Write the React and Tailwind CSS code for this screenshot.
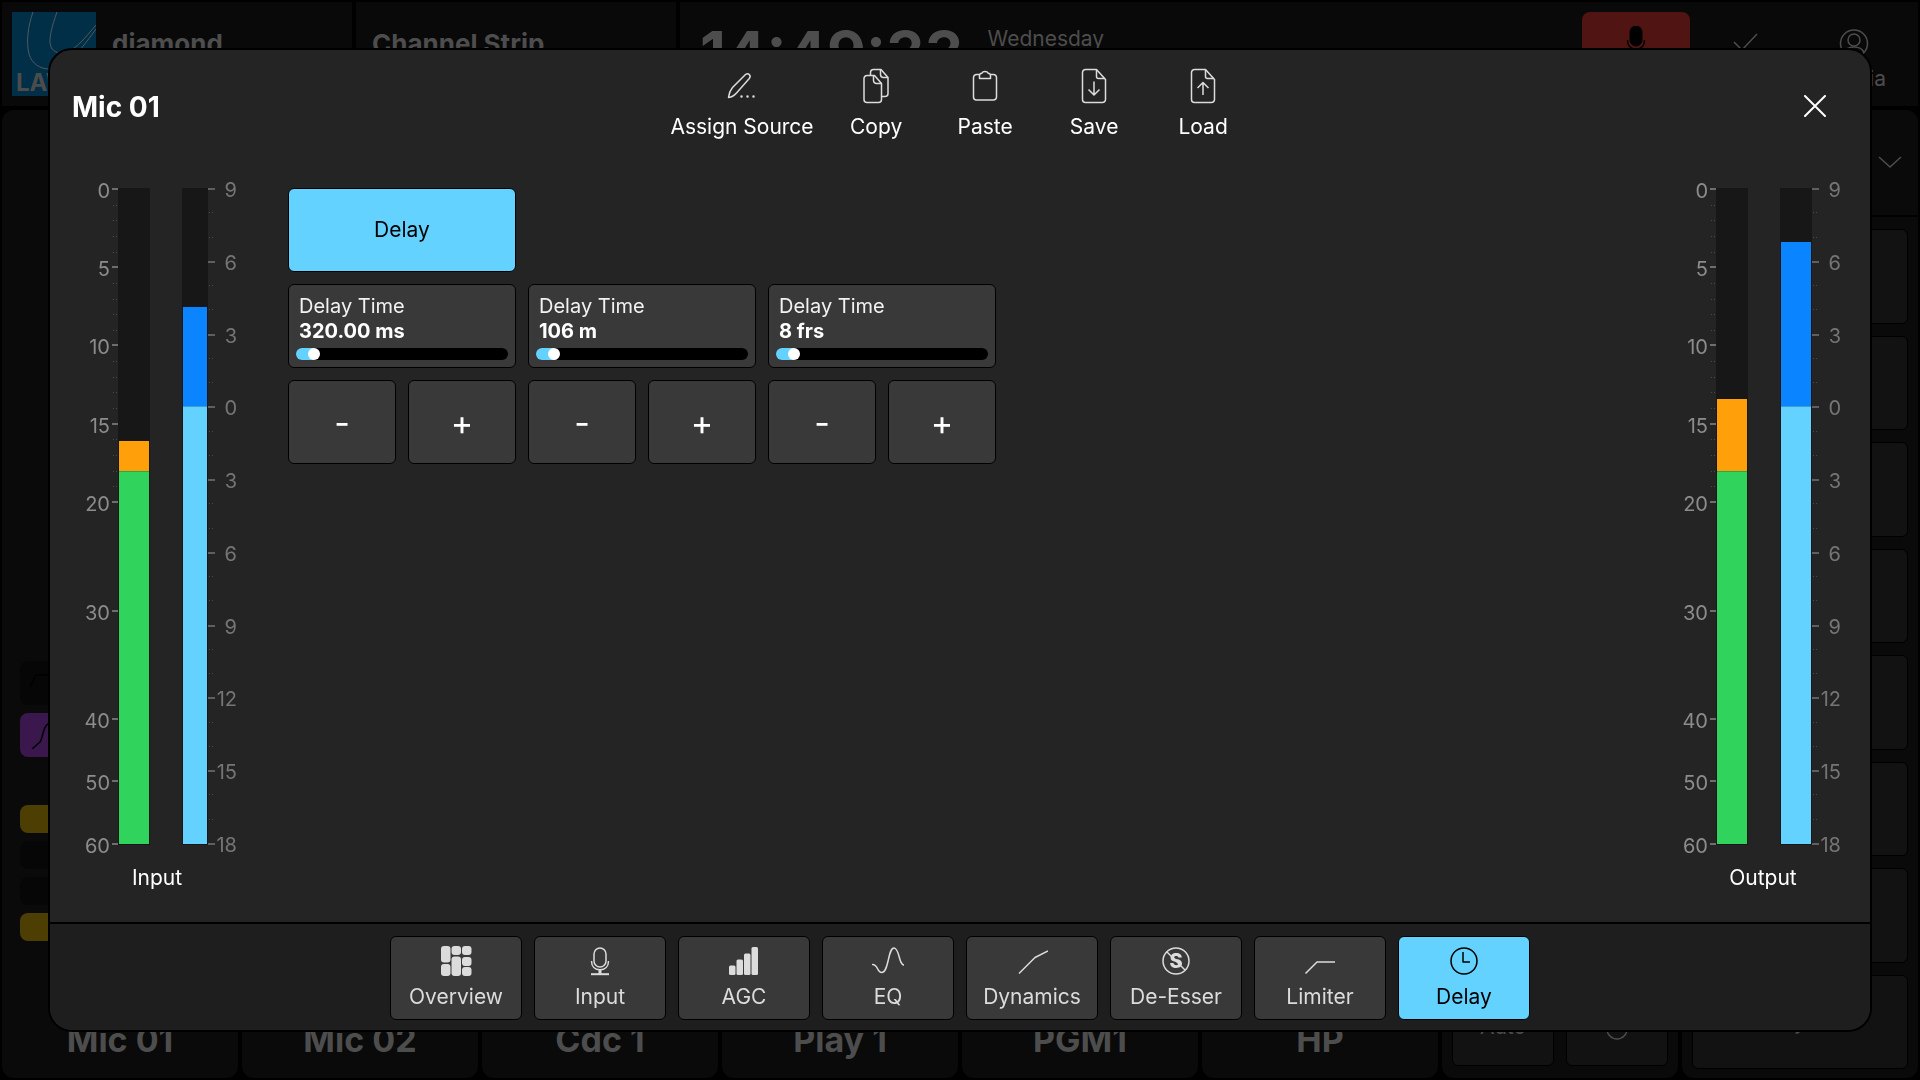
import React, { useState } from "react";
import clsx from "clsx";

const STRIPS = ["Mic 01", "Mic 02", "Cdc 1", "Play 1", "PGM1", "HP"];

const LEVEL_SCALE = [
  { label: "0", y: 15 },
  { label: "5", y: 93 },
  { label: "10", y: 171 },
  { label: "15", y: 250 },
  { label: "20", y: 328 },
  { label: "30", y: 437 },
  { label: "40", y: 545 },
  { label: "50", y: 607 },
  { label: "60", y: 670 },
];

const GAIN_LABELS = ["9", "6", "3", "0", "3", "6", "9", "12", "15", "18"];

const METER_TOP = 14;
const METER_BOTTOM = 670;

/* ---------- Icons ---------- */

const Icon = ({ size = 32, children }) => (
  <svg
    width={size}
    height={size}
    viewBox={`0 0 ${size} ${size}`}
    fill="none"
    stroke="currentColor"
    strokeWidth="1.5"
    strokeLinejoin="round"
    aria-hidden="true"
  >
    {children}
  </svg>
);

const PencilIcon = () => (
  <Icon size={36}>
    <path d="M4.5 29.5 C5 25.5 6 22.5 8.5 19.5 L21.5 6.5 C23 5.3 24.3 5.5 25.3 6.6 C26.4 7.7 26.5 9 25.3 10.5 L12.5 25 C10.5 27.5 8 29 4.5 29.5 Z" />
    <path
      d="M17.5 28.5h.01M23.5 28.5h.01M29.5 28.5h.01"
      strokeWidth="2.5"
      strokeLinecap="round"
    />
  </Icon>
);

const CopyIcon = () => (
  <Icon size={36}>
    <path d="M12.5 7.5V4.5a3 3 0 0 1 3-3H23l7 8v16a3 3 0 0 1-3 3h-3" />
    <path d="M22.5 2v4.5a3 3 0 0 0 3 3H30" />
    <path d="M9 7.5h7.5l7 8V31.5a3 3 0 0 1-3 3H9a3 3 0 0 1-3-3V10.5a3 3 0 0 1 3-3Z" />
    <path d="M15.5 8v4.5a3 3 0 0 0 3 3h5" />
  </Icon>
);

const PasteIcon = () => (
  <Icon size={36}>
    <path d="M12 6.5h-2.5a3 3 0 0 0-3 3v19.5a3 3 0 0 0 3 3h17a3 3 0 0 0 3-3v-19.5a3 3 0 0 0-3-3H24" />
    <path d="M12.5 10.5V7.5c0-1.5 1-2 2.2-2.2C15.5 3.8 16.6 3.5 18 3.5s2.5.3 3.3 1.8c1.2.2 2.2.7 2.2 2.2v3Z" />
  </Icon>
);

const PageShape = () => (
  <>
    <path d="M9.5 1.5H20.5l9 10V31.5a3 3 0 0 1-3 3H9.5a3 3 0 0 1-3-3V4.5a3 3 0 0 1 3-3Z" />
    <path d="M20.5 2v6.5a2 2 0 0 0 2 2h6.5" />
  </>
);

const SaveIcon = () => (
  <Icon size={36}>
    <PageShape />
    <path d="M18 13.5V26.5M12.5 21.5l5.5 5.5 5.5-5.5" />
  </Icon>
);

const LoadIcon = () => (
  <Icon size={36}>
    <PageShape />
    <path d="M18 27V14.5M12.5 20l5.5-5.5 5.5 5.5" />
  </Icon>
);

const OverviewIcon = () => (
  <Icon>
    <g fill="currentColor" stroke="none">
      <rect x="1" y="1" width="9.5" height="16.5" rx="3" />
      <rect x="1" y="19" width="9.5" height="12" rx="3" />
      <rect x="11.5" y="1" width="9.5" height="9" rx="3" />
      <rect x="11.5" y="11.5" width="9.5" height="19.5" rx="3" />
      <rect x="22" y="1" width="9.5" height="9" rx="3" />
      <rect x="22" y="12" width="9.5" height="9" rx="3" />
      <rect x="22" y="22" width="9.5" height="9" rx="3" />
    </g>
  </Icon>
);

const MicIcon = () => (
  <Icon>
    <rect x="10" y="3" width="12" height="19" rx="6" />
    <path d="M7.5 16c0 5.5 3.5 8.8 8.5 8.8s8.5-3.3 8.5-8.8" />
    <path d="M16 25v4" strokeWidth="3" />
    <path d="M7 29.2h18" strokeWidth="2" />
  </Icon>
);

const AgcIcon = () => (
  <Icon>
    <g fill="currentColor" stroke="none">
      <rect x="1" y="20.5" width="6.5" height="9.5" rx="1.5" />
      <rect x="8.5" y="14.5" width="6.5" height="15.5" rx="1.5" />
      <rect x="16" y="8.5" width="6.5" height="21.5" rx="1.5" />
      <rect x="23.5" y="2" width="6.5" height="28" rx="1.5" />
    </g>
  </Icon>
);

const EqIcon = () => (
  <Icon>
    <path
      d="M.5 19.5c3 0 4 2 5.2 4.5 1 2 2.2 3.5 4 3.5 7.3 0 6-24.5 12.3-24.5 3.2 0 4.5 6 5.8 11 .9 3.2 1.8 5.5 4 6"
      strokeLinecap="round"
    />
  </Icon>
);

const DynamicsIcon = () => (
  <Icon>
    <path d="M3 28.5 19 12.5 32 6" />
  </Icon>
);

const DeEsserIcon = () => (
  <Icon>
    <circle cx="16" cy="16" r="13" />
    <text
      x="16"
      y="23"
      textAnchor="middle"
      fontSize="20"
      fontWeight="800"
      fontFamily="Inter, sans-serif"
      fill="currentColor"
      stroke="none"
    >
      S
    </text>
    <path d="M7 7 25 25" />
  </Icon>
);

const LimiterIcon = () => (
  <Icon>
    <path d="M1.5 28.5 13 17H31" />
  </Icon>
);

const DelayIcon = () => (
  <Icon>
    <circle cx="16" cy="16" r="13" />
    <path d="M15 7v10h7" />
  </Icon>
);

const ACTIONS = [
  { label: "Assign Source", icon: PencilIcon },
  { label: "Copy", icon: CopyIcon },
  { label: "Paste", icon: PasteIcon },
  { label: "Save", icon: SaveIcon },
  { label: "Load", icon: LoadIcon },
];

const TABS = [
  { label: "Overview", icon: OverviewIcon },
  { label: "Input", icon: MicIcon },
  { label: "AGC", icon: AgcIcon },
  { label: "EQ", icon: EqIcon },
  { label: "Dynamics", icon: DynamicsIcon },
  { label: "De-Esser", icon: DeEsserIcon },
  { label: "Limiter", icon: LimiterIcon },
  { label: "Delay", icon: DelayIcon },
];

/* ---------- Meter ---------- */

const Meter = ({ label, gainWidth, peakY, gainY, className }) => {
  const gainRight = 100 + gainWidth;
  const gainStep = (METER_BOTTOM - METER_TOP - 1) / 27;
  const zeroY = Math.round(METER_TOP + gainStep * 9);

  return (
    <section className="w-[214px] shrink-0 pt-3" aria-label={`${label} level`}>
      <div className={clsx("flex", className)}>
        <svg
          width={gainRight + 30}
          height="684"
          viewBox={`0 0 ${gainRight + 30} 684`}
          className="overflow-visible"
          shapeRendering="crispEdges"
          fontSize="20"
        >
          {/* level scale */}
          {LEVEL_SCALE.map(({ label, y }) => (
            <g key={label}>
              <text x="28" y={y + 9} textAnchor="end" fill="#8c8c8c">
                {label}
              </text>
              <rect x="30" y={y - 1} width="6" height="2" fill="#6e6e6e" />
            </g>
          ))}
          {Array.from({ length: 20 }, (_, i) => i)
            .filter((i) => i % 5)
            .map((i) => (
              <path
                key={i}
                d={`M31 ${Math.round(15 + i * 15.65)}.5h1m2 0h1`}
                stroke="#4a4a4a"
              />
            ))}

          {/* level bar */}
          <rect x="36" y={METER_TOP} width="32" height="657" fill="#171717" />
          <rect x="37" y={peakY} width="30" height={297 - peakY} fill="#ffa00a" />
          <rect x="37" y="297" width="30" height="373" fill="#30d35b" />
          <rect x="37" y="297" width="30" height="1" fill="#2aa84b" />

          {/* gain bar */}
          <rect x="100" y={METER_TOP} width={gainWidth} height="657" fill="#171717" />
          <rect
            x="101"
            y={gainY}
            width={gainWidth - 2}
            height={zeroY - gainY}
            fill="#0a84ff"
          />
          <rect
            x="101"
            y={zeroY}
            width={gainWidth - 2}
            height={METER_BOTTOM - zeroY}
            fill="#64d2ff"
          />
          <rect x="101" y={zeroY} width={gainWidth - 2} height="1" fill="#3d9fd0" />

          {/* gain scale */}
          {GAIN_LABELS.map((text, i) => {
            const y = Math.round(METER_TOP + 1 + i * 3 * gainStep);
            return (
              <g key={i}>
                <rect x={gainRight} y={y - 1} width="7" height="2" fill="#5f5f5f" />
                <text x={gainRight + 29} y={y + 8} textAnchor="end" fill="#757575">
                  {text}
                </text>
              </g>
            );
          })}
          {Array.from({ length: 27 }, (_, i) => i)
            .filter((i) => i % 3)
            .map((i) => (
              <path
                key={i}
                d={`M${gainRight + 1} ${Math.round(METER_TOP + i * gainStep)}.5h1m2 0h1`}
                stroke="#4a4a4a"
              />
            ))}
        </svg>
      </div>
      <h2 className="mt-1.5 text-center text-[21px] leading-7 text-white">{label}</h2>
    </section>
  );
};

/* ---------- Delay page ---------- */

const DelayParam = ({ id, value, unit }) => {
  const [position, setPosition] = useState(6);
  const fill = `calc(6px + (100% - 12px) * ${position / 100})`;

  return (
    <div className="grid w-[228px] grid-cols-2 gap-3">
      <div className="col-span-2 flex h-21 flex-col rounded-md border border-black bg-[#393939] px-[7px] pt-[9px]">
        <label
          htmlFor={id}
          className="px-[3px] text-[20px] leading-[25px] text-[#f2f2f2]"
        >
          Delay Time
          <span className="block font-bold text-white">
            {value} {unit}
          </span>
        </label>
        <input
          id={id}
          type="range"
          value={position}
          onChange={(e) => setPosition(Number(e.target.value))}
          className="mt-1 h-3 w-full appearance-none rounded-full bg-black [&::-webkit-slider-thumb]:size-3 [&::-webkit-slider-thumb]:appearance-none [&::-webkit-slider-thumb]:rounded-full [&::-webkit-slider-thumb]:bg-white"
          style={{
            backgroundImage: `linear-gradient(to right, #64d2ff ${fill}, #000 ${fill})`,
          }}
        />
      </div>
      <button
        aria-label={`Decrease ${unit}`}
        className="h-21 rounded-md border border-black bg-[#393939] text-[34px] text-white"
      >
        -
      </button>
      <button
        aria-label={`Increase ${unit}`}
        className="h-21 rounded-md border border-black bg-[#393939] text-[34px] text-white"
      >
        +
      </button>
    </div>
  );
};

/* ---------- Dimmed console behind the dialog ---------- */

const Console = () => (
  <div
    className="flex h-screen flex-col gap-1 overflow-hidden bg-black p-0.5 text-[#4d4d4d]"
    aria-hidden="true"
  >
    <header className="flex h-26 shrink-0 gap-1">
      <div className="flex w-[350px] gap-4 bg-[#090909] p-2.5">
        <svg width="84" height="84" viewBox="0 0 84 84" className="shrink-0">
          <rect width="84" height="84" fill="#002f47" />
          <g fill="none" stroke="#4f5a60" strokeWidth="1">
            <path d="M21 0C16 14 14 30 17 42c3 10 11 15 21 15 14 0 26-12 46-40" />
            <path d="M45 0C40 14 36 28 39 35c3 6 9 7 16 5 10-4 18-14 29-27" />
          </g>
          <text x="4" y="79" fontSize="24" fontWeight="700" fill="#4c4c4c">
            LAWO
          </text>
        </svg>
        <span className="pt-3.5 text-[26px] leading-9 font-bold">diamond</span>
      </div>
      <div className="w-[320px] bg-[#090909] px-4 pt-6 text-[26px] leading-9 font-bold">
        Channel Strip
      </div>
      <div className="flex flex-1 bg-[#090909] pl-5">
        <span className="pt-4 text-[60px] leading-[70px] font-bold">14:49:33</span>
        <span className="pt-[23px] pl-6 text-[21px] leading-7">Wednesday</span>
        <div className="ml-auto flex pt-2.5 pr-8">
          <div className="flex h-21 w-[108px] justify-center rounded-lg bg-[#501512] pt-3.5 text-black">
            <svg width="24" height="40" viewBox="0 0 24 40" fill="none" stroke="currentColor">
              <rect x="6" y="0" width="12" height="20" rx="6" fill="currentColor" />
              <path d="M3.5 14c0 6 3.5 9 8.5 9s8.5-3 8.5-9" strokeWidth="1.5" />
            </svg>
          </div>
          <svg
            width="60"
            height="40"
            viewBox="0 0 60 40"
            fill="none"
            stroke="currentColor"
            strokeWidth="1.5"
            className="mr-12 ml-6"
          >
            <path d="M20 30l8 8 15-16" />
          </svg>
          <div className="flex w-16 flex-col items-end pt-[17px]">
            <svg
              width="64"
              height="30"
              viewBox="0 0 64 30"
              fill="none"
              stroke="currentColor"
              strokeWidth="1.5"
            >
              <circle cx="32" cy="14.5" r="13.5" />
              <circle cx="32" cy="11" r="6" />
              <path d="M22 24c2-8 18-8 20 0" />
            </svg>
            <span className="pt-1.5 text-[21px] leading-7">ia</span>
          </div>
        </div>
      </div>
    </header>

    <div className="grid min-h-0 flex-1 grid-cols-8 gap-1">
      {STRIPS.map((name, i) => (
        <div
          key={name}
          className="flex flex-col justify-end rounded-xl bg-[#0a0a0a] px-[18px] pb-[18px]"
        >
          {i === 0 && (
            <div className="mb-[79px] flex flex-col gap-2">
              <div className="h-11 rounded-lg bg-[#060606] p-2 text-black">
                <svg width="40" height="28" fill="none" stroke="currentColor" strokeWidth="1.5">
                  <path d="M2 18l6-12h20" />
                </svg>
              </div>
              <div className="mb-10 h-11 rounded-lg bg-[#3a184e] p-2 text-black">
                <svg width="40" height="28" fill="none" stroke="currentColor" strokeWidth="1.5">
                  <path d="M4 28l8-7c3-4 3-16 8-18h8" />
                </svg>
              </div>
              <div className="h-7 rounded-lg bg-[#4d3e04]" />
              <div className="h-7 rounded-lg bg-[#060606]" />
              <div className="h-7 rounded-lg bg-[#060606]" />
              <div className="h-7 rounded-lg bg-[#4d3e04]" />
            </div>
          )}
          <span className="text-center text-[34px] leading-10 font-bold">{name}</span>
        </div>
      ))}

      <div className="flex items-end gap-3 rounded-xl bg-[#0a0a0a] px-2.5 pb-3">
        <div className="flex h-[94px] flex-1 justify-center rounded-md border border-black bg-[#121212] pt-10 text-[21px] leading-7">
          Auto
        </div>
        <div className="flex h-[94px] flex-1 justify-center rounded-md border border-black bg-[#121212] pt-11">
          <svg width="24" height="24" fill="none" stroke="currentColor" strokeWidth="1.5">
            <circle cx="12" cy="12" r="10" />
          </svg>
        </div>
      </div>

      <div className="flex flex-col rounded-xl bg-[#0a0a0a]">
        <div className="flex h-[107px] shrink-0 justify-end border-b-2 border-black pt-10 pr-4">
          <svg
            width="24"
            height="24"
            viewBox="0 0 24 24"
            fill="none"
            stroke="currentColor"
            strokeWidth="1.5"
          >
            <path d="M1 7l11 10L23 7" />
          </svg>
        </div>
        <div className="flex flex-1 flex-col gap-3 px-2.5 pt-3 pb-[9px]">
          {Array.from({ length: 8 }, (_, i) => (
            <div
              key={i}
              className="flex flex-1 items-center justify-center rounded-md border border-black bg-[#121212] text-[21px] leading-7"
            >
              {i === 7 && "y"}
            </div>
          ))}
        </div>
      </div>
    </div>
  </div>
);

export default function App() {
  const [tab, setTab] = useState("Delay");
  const [delayOn, setDelayOn] = useState(true);

  return (
    <div className="font-[Inter,sans-serif]">
      <Console />

      <div
        role="dialog"
        aria-label="Mic 01"
        className="fixed inset-12 flex flex-col overflow-hidden rounded-3xl border-2 border-black bg-[#242424] text-white"
      >
        <header className="grid h-28 shrink-0 grid-cols-[1fr_auto_1fr] items-center">
          <h1 className="pt-0.5 pl-[22px] text-[28px] font-bold">Mic 01</h1>
          <nav className="flex gap-3 pb-1">
            {ACTIONS.map(({ label, icon: ActionIcon }) => (
              <button
                key={label}
                className="flex min-w-[97px] flex-col items-center gap-[9px] px-0.5 text-[21px] leading-7"
              >
                <span className="text-[#dcdcdc]">
                  <ActionIcon />
                </span>
                {label}
              </button>
            ))}
          </nav>
          <button aria-label="Close" className="mr-10 justify-self-end p-1">
            <svg
              width="22"
              height="22"
              viewBox="0 0 22 22"
              stroke="currentColor"
              strokeWidth="2"
              strokeLinecap="round"
            >
              <path d="M1 1l20 20M21 1L1 21" />
            </svg>
          </button>
        </header>

        <main className="flex min-h-0 flex-1 justify-between">
          <Meter label="Input" gainWidth={26} peakY={267} gainY={133} className="pl-8" />

          <div className="flex flex-1 flex-col gap-3 px-6 pt-[26px]">
            <button
              aria-pressed={delayOn}
              onClick={() => setDelayOn(!delayOn)}
              className={clsx(
                "h-21 w-[228px] rounded-md border border-black text-[21px]",
                delayOn ? "bg-[#64d2ff] text-black" : "bg-[#393939] text-white"
              )}
            >
              Delay
            </button>
            <div className="flex flex-wrap gap-3">
              <DelayParam id="delay-ms" value="320.00" unit="ms" />
              <DelayParam id="delay-m" value="106" unit="m" />
              <DelayParam id="delay-frs" value="8" unit="frs" />
            </div>
          </div>

          <Meter
            label="Output"
            gainWidth={32}
            peakY={225}
            gainY={68}
            className="justify-end pr-7"
          />
        </main>

        <footer className="flex h-27 shrink-0 justify-center gap-3 border-t-2 border-black bg-[#1e1e1e] pt-3">
          {TABS.map(({ label, icon: TabIcon }) => (
            <button
              key={label}
              onClick={() => setTab(label)}
              className={clsx(
                "flex h-21 w-33 flex-col items-center justify-center gap-1.5 rounded-md border border-black text-[21px] leading-7",
                tab === label ? "bg-[#64d2ff] text-black" : "bg-[#393939] text-[#dcdcdc]"
              )}
            >
              <TabIcon />
              {label}
            </button>
          ))}
        </footer>
      </div>
    </div>
  );
}
